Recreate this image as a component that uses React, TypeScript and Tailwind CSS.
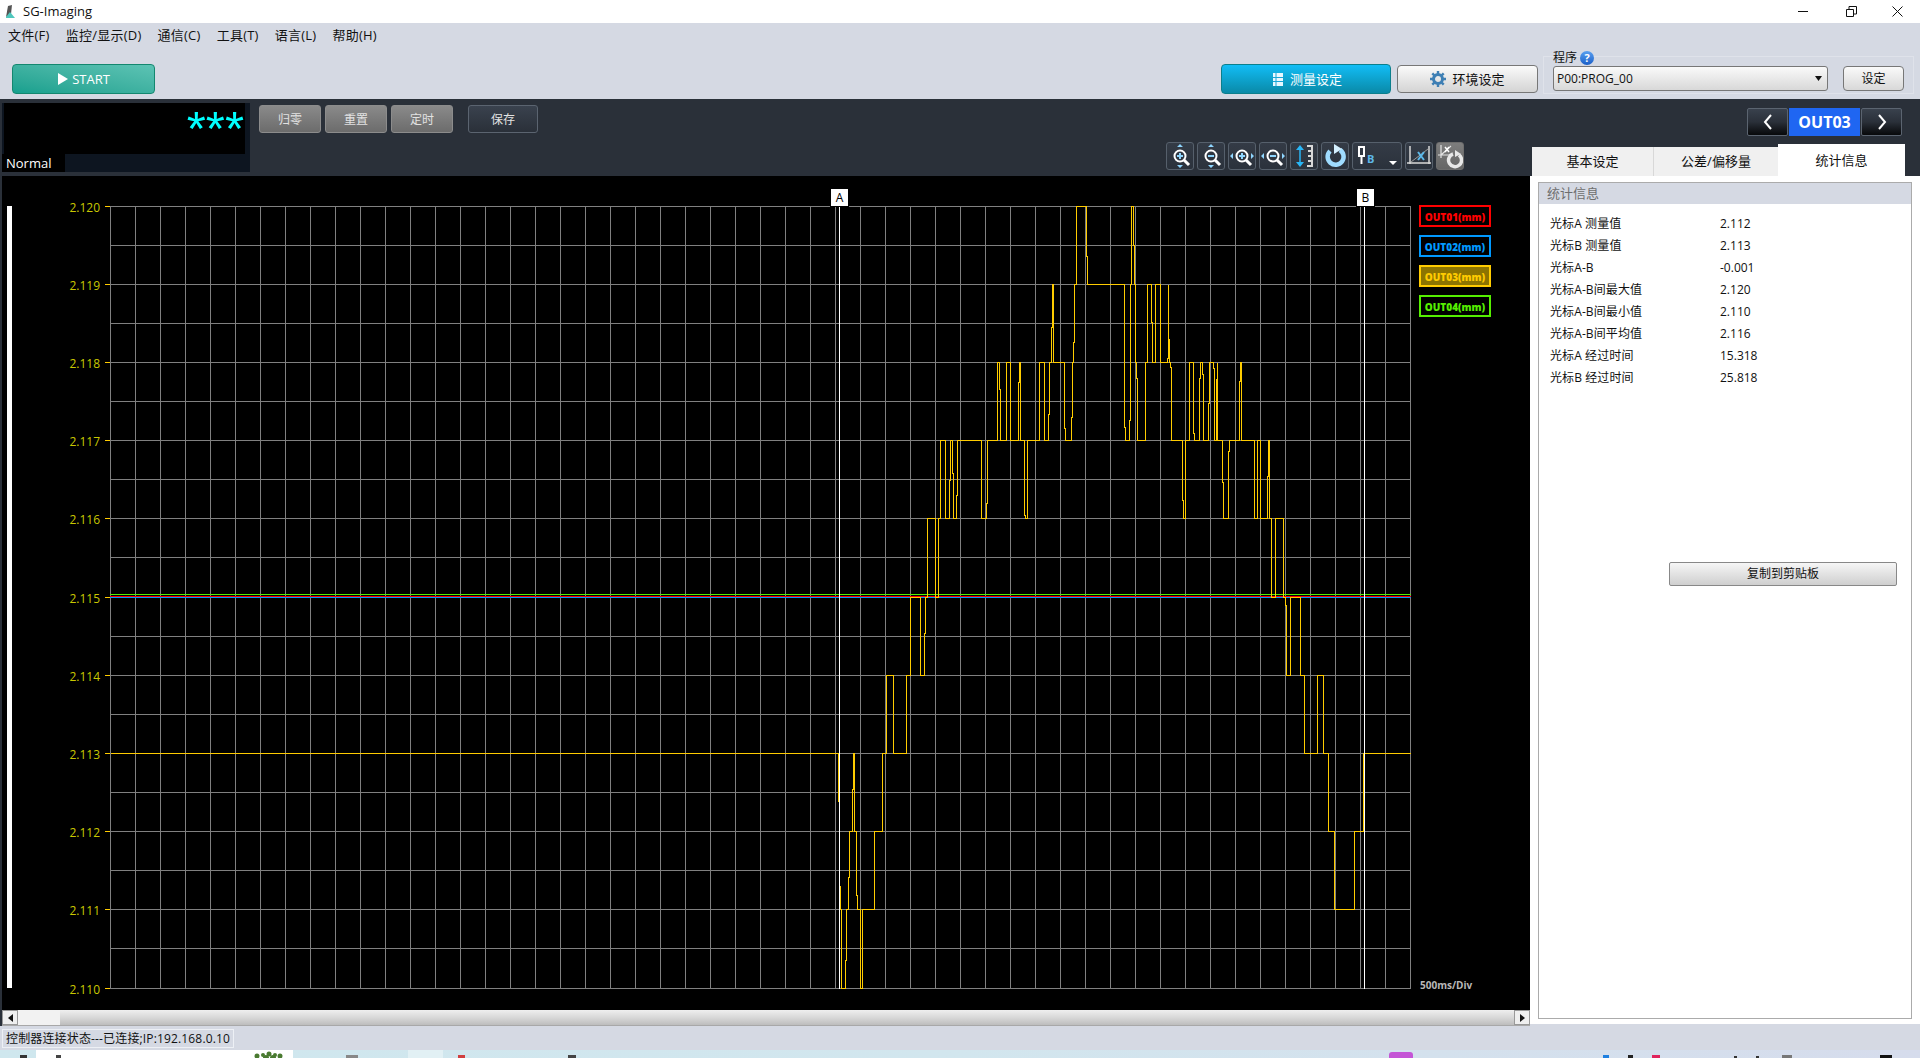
import React from "react";

const GRID_Y = [206, 245, 284, 323, 362, 401, 440, 479, 518, 557, 597, 636, 675, 714, 753, 792, 831, 870, 909, 948, 988];
const GRID_X = Array.from({ length: 53 }, (_, i) => 110 + i * 25);
const LABELS = ["2.120", "2.119", "2.118", "2.117", "2.116", "2.115", "2.114", "2.113", "2.112", "2.111", "2.110"];
const STEPS: [number, number][] = [
  [838, 801], [839, 886], [840, 909], [841, 988], [845, 960], [846, 909], [848, 877], [849, 831], [852, 789], [853, 753], [854, 831], [856, 895], [857, 909], [860, 988], [862, 909], [874, 831], [882, 753], [886, 675], [893, 753], [906, 675], [910, 597], [920, 675], [924, 633], [925, 597], [927, 518], [935, 597], [938, 518], [940, 440], [945, 518], [949, 480], [950, 440], [952, 473], [953, 518], [956, 495], [957, 440], [981, 518], [986, 503], [987, 440], [997, 362], [999, 389], [1000, 440], [1006, 362], [1010, 440], [1018, 382], [1019, 362], [1020, 440], [1024, 515], [1025, 518], [1027, 440], [1039, 362], [1044, 440], [1048, 414], [1049, 362], [1051, 327], [1052, 284], [1053, 362], [1064, 428], [1065, 440], [1071, 417], [1072, 362], [1073, 342], [1074, 284], [1076, 206], [1086, 256], [1087, 284], [1124, 427], [1125, 440], [1129, 420], [1130, 284], [1131, 206], [1133, 245], [1134, 284], [1135, 362], [1136, 378], [1137, 440], [1145, 362], [1147, 284], [1151, 322], [1152, 362], [1155, 284], [1160, 362], [1167, 358], [1168, 284], [1168, 339], [1169, 362], [1170, 367], [1171, 440], [1182, 500], [1183, 518], [1185, 440], [1189, 362], [1193, 433], [1194, 440], [1199, 378], [1200, 362], [1202, 374], [1203, 440], [1208, 403], [1209, 362], [1213, 368], [1214, 440], [1216, 379], [1217, 362], [1217, 440], [1222, 482], [1223, 518], [1228, 451], [1229, 440], [1239, 381], [1240, 362], [1241, 440], [1254, 518], [1257, 440], [1260, 518], [1267, 476], [1268, 440], [1269, 518], [1271, 597], [1275, 518], [1283, 597], [1285, 605], [1286, 675], [1290, 597], [1300, 675], [1304, 753], [1317, 675], [1323, 753], [1328, 831], [1334, 909], [1354, 831], [1363, 753], [1410, 753],
];
const tracePath = "M110.5 753.5" + STEPS.map(([x, y]) => `H${x + 0.5}V${y + 0.5}`).join("");

function Chart() {
  return (
    <svg width={1528} height={834} viewBox="2 176 1528 834" className="block">
      <rect x={7} y={206} width={5} height={782} fill="#fff" />
      <g stroke="#808080" strokeWidth={1} shapeRendering="crispEdges">
        {GRID_X.map((x) => <line key={x} x1={x + 0.5} x2={x + 0.5} y1={206} y2={989} />)}
        {GRID_Y.map((y) => <line key={y} x1={110} x2={1411} y1={y + 0.5} y2={y + 0.5} />)}
      </g>
      {LABELS.map((t, i) => {
        const y = GRID_Y[i * 2];
        return (
          <g key={t}>
            <line x1={105} x2={110} y1={y + 0.5} y2={y + 0.5} stroke="#ffcc00" shapeRendering="crispEdges" />
            <text x={100} y={y + 5.5} textAnchor="end" fontSize={12} fill="#c8c800" fontFamily="'Open Sans','Noto Sans',sans-serif">{t}</text>
          </g>
        );
      })}
      <g shapeRendering="crispEdges">
        <line x1={110} x2={1411} y1={594.5} y2={594.5} stroke="#55ee00" />
        <line x1={110} x2={1411} y1={596.5} y2={596.5} stroke="#ff0000" />
        <line x1={110} x2={1411} y1={597.5} y2={597.5} stroke="#0099ff" />
        <path d={tracePath} fill="none" stroke="#ffcc00" strokeWidth={1} />
        <line x1={839.5} x2={839.5} y1={206} y2={989} stroke="#fff" />
        <line x1={1364.5} x2={1364.5} y1={206} y2={989} stroke="#fff" />
      </g>
    </svg>
  );
}

const Magnifier = ({ sign }: { sign: "+" | "-" }) => (
  <g fill="none">
    <circle cx={14} cy={14} r={5.5} stroke="#fff" strokeWidth={2} />
    <path d="M18 18l5 5" stroke="#fff" strokeWidth={3} />
    <path d={sign === "+" ? "M11 14h6M14 11v6" : "M11 14h6"} stroke="#8fd6ff" strokeWidth={2} />
  </g>
);

function ToolIcon({ w = 28, active, children }: { w?: number; active?: boolean; children: React.ReactNode }) {
  const cls = active
    ? "border-[#6d6d6d] bg-gradient-to-b from-[#7d7d7d] to-[#666666]"
    : "border-[#56606c] bg-gradient-to-b from-[#343b46] to-[#2b323c]";
  return (
    <div className={`h-[28px] rounded-[3px] border ${cls}`}>
      <svg width={w - 2} height={26} viewBox={`1 1 ${w - 2} 26`} className="block">{children}</svg>
    </div>
  );
}

function Toolbar() {
  return (
    <div className="flex gap-[3px] mb-[6px]">
      <ToolIcon><path d="M14 2l3 3h-6zM14 26l3-3h-6z" fill="#8fd6ff" /><Magnifier sign="+" /></ToolIcon>
      <ToolIcon><path d="M14 2l3 3h-6zM14 26l3-3h-6z" fill="#8fd6ff" /><Magnifier sign="-" /></ToolIcon>
      <ToolIcon><path d="M2 14l3-3v6zM26 14l-3-3v6z" fill="#8fd6ff" /><Magnifier sign="+" /></ToolIcon>
      <ToolIcon><path d="M2 14l3-3v6zM26 14l-3-3v6z" fill="#8fd6ff" /><Magnifier sign="-" /></ToolIcon>
      <ToolIcon>
        <path d="M10 6v16" stroke="#29b6f6" strokeWidth={1.5} />
        <path d="M10 3l4 5H6zM10 25l4-5H6z" fill="#29b6f6" />
        <path d="M22 3v22M17 4h5M18 9h4M18 14h4M18 19h4M17 24h5" stroke="#d8d8d8" strokeWidth={2} fill="none" />
      </ToolIcon>
      <ToolIcon>
        <path d="M9 9a8 8 0 1 0 10-1" fill="none" stroke="#9fdcff" strokeWidth={4.5} />
        <path d="M13 2l8 5-8 5z" fill="#d4f0ff" />
      </ToolIcon>
      <ToolIcon w={50}>
        <path d="M7 5h5v9H7zM9.5 14v8" fill="none" stroke="#fff" strokeWidth={2} />
        <text x={15} y={21} fontSize={11} fontWeight={700} fill="#5db8e8" fontFamily="'Open Sans',sans-serif">B</text>
        <path d="M37 19h8l-4 4z" fill="#fff" />
      </ToolIcon>
      <ToolIcon>
        <path d="M5 4v18M24 4v18M2 21h24" stroke="#d8d8d8" strokeWidth={1.5} fill="none" />
        <path d="M6 20L23 7" stroke="#9a9a9a" strokeWidth={1} />
        <path d="M13 10l6 8M19 10l-6 8" stroke="#5db8e8" strokeWidth={2} />
      </ToolIcon>
      <ToolIcon active>
        <path d="M5 3v13M2 13h14M5 13L15 4" stroke="#e4e4e4" strokeWidth={1.2} fill="none" />
        <path d="M9 5l4 5M13 5l-4 5" stroke="#ffffff" strokeWidth={1.5} />
        <path d="M17 12a6.5 6.5 0 1 0 6 1" fill="none" stroke="#e8e8e8" strokeWidth={3.5} />
        <path d="M19 8l6 4-6 3z" fill="#e8e8e8" />
      </ToolIcon>
    </div>
  );
}

const GrayBtn = ({ t }: { t: string }) => (
  <button className="w-[62px] h-[28px] pt-[2px] rounded-[3px] border border-[#8c8c8c] bg-gradient-to-b from-[#8a8a8a] to-[#6c6c6c] text-[12px] text-[#e2e2e2]">{t}</button>
);

const Legend = ({ t, cls }: { t: string; cls: string }) => (
  <div className={`h-[22px] w-[72px] pt-[2px] border-2 flex items-center justify-center text-[10px] font-extrabold font-['Open_Sans',sans-serif] ${cls}`}>{t}</div>
);

const STATS: [string, string][] = [
  ["光标A 测量值", "2.112"],
  ["光标B 测量值", "2.113"],
  ["光标A-B", "-0.001"],
  ["光标A-B间最大值", "2.120"],
  ["光标A-B间最小值", "2.110"],
  ["光标A-B间平均值", "2.116"],
  ["光标A 经过时间", "15.318"],
  ["光标B 经过时间", "25.818"],
];

export default function App() {
  return (
    <div className="w-[1920px] h-[1058px] overflow-hidden flex flex-col bg-[#d5d9e3] text-[12px] text-[#111] font-['Open_Sans','Noto_Sans_CJK_SC',sans-serif]">
      {/* title bar */}
      <div className="h-[23px] bg-white flex items-center">
        <svg width={11} height={14} viewBox="0 0 11 14" className="ml-[5px]">
          <path d="M3 1l4-1-1 9-5 3z" fill="#555" />
          <path d="M1 12l4-5 5 6H1z" fill="#4fc7bd" />
        </svg>
        <span className="ml-[7px] text-[13px]">SG-Imaging</span>
        <div className="ml-auto flex items-center">
          <svg width={11} height={11} viewBox="0 0 11 11" className="mr-[37px]"><path d="M0 5.5h10" stroke="#111" /></svg>
          <svg width={11} height={11} viewBox="0 0 11 11" className="mr-[35px]"><path d="M.5 3.5h7v7h-7zM3 3V.5h7.5V8H8" fill="none" stroke="#111" /></svg>
          <svg width={11} height={11} viewBox="0 0 11 11" className="mr-[17px]"><path d="M.5.5l10 10M10.5.5l-10 10" stroke="#111" /></svg>
        </div>
      </div>
      {/* menu */}
      <div className="h-[26px] flex items-center pl-[8px] gap-[16px] text-[13px] tracking-[0.25px]">
        {["文件(F)", "监控/显示(D)", "通信(C)", "工具(T)", "语言(L)", "帮助(H)"].map((m) => <span key={m}>{m}</span>)}
      </div>
      {/* action row */}
      <div className="h-[50px] flex">
        <button className="ml-[12px] mt-[15px] w-[143px] h-[30px] pt-[1px] rounded-[4px] border border-[#13876f] bg-gradient-to-tr from-[#14a08e] to-[#5cc3b4] text-white text-[13px] flex items-center justify-center gap-[4px]">
          <svg width={11} height={12} viewBox="0 0 11 12" className="-mt-[2px]"><path d="M1 0l10 6-10 6z" fill="#fff" /></svg>
          START
        </button>
        <button className="ml-auto mt-[15px] w-[170px] h-[30px] pt-[2px] pl-[3px] rounded-[4px] border border-[#0b7f8c] bg-gradient-to-b from-[#12bdf6] to-[#0a8aa8] text-white text-[13px] flex items-center justify-center gap-[7px]">
          <svg width={10} height={13} viewBox="0 0 10 13" className="-mt-[2px]"><path d="M0 0h10v13H0z" fill="#e8f8ff" /><path d="M0 4.500h10M0 8.500h10M3 0v13" stroke="#19a6d6" /></svg>
          测量设定
        </button>
        <button className="ml-[6px] mt-[16px] w-[141px] h-[28px] pt-[2px] rounded-[4px] border border-[#777] bg-gradient-to-b from-[#fafafa] to-[#d4d4d4] text-[13px] flex items-center justify-center gap-[6px]">
          <svg width={16} height={16} viewBox="0 0 16 16" className="-mt-[2px]">
            <circle cx={8} cy={8} r={4.5} fill="none" stroke="#3e7fb4" strokeWidth={3} />
            <path d="M8 0v3M8 13v3M0 8h3M13 8h3M2.3 2.3l2 2M11.7 11.7l2 2M2.3 13.7l2-2M11.7 4.3l2-2" stroke="#3e7fb4" strokeWidth={2.4} />
          </svg>
          环境设定
        </button>
        <div className="relative ml-[5px] mr-[6px] mt-[7px] w-[371px] h-[38px] border border-[#dfe2ea] flex items-start pl-[9px] pt-[9px]">
          <div className="absolute left-[9px] -top-[8px] flex items-center gap-[3px]">
            <span>程序</span>
            <span className="w-[14px] h-[14px] rounded-full bg-gradient-to-b from-[#5aa0f0] to-[#1a5fc8] text-white text-[11px] font-bold leading-[14px] text-center">?</span>
          </div>
          <div className="w-[275px] h-[25px] rounded-[3px] border border-[#777] bg-gradient-to-b from-[#fafafa] to-[#d8d8d8] flex items-center pl-[3px] pr-[5px] justify-between">
            <span>P00:PROG_00</span>
            <svg width={7} height={5} viewBox="0 0 7 5"><path d="M0 0h7L3.500 5z" fill="#111" /></svg>
          </div>
          <button className="ml-[15px] w-[61px] h-[25px] rounded-[4px] border border-[#777] bg-gradient-to-b from-[#fafafa] to-[#d8d8d8]">设定</button>
        </div>
      </div>
      {/* dark header */}
      <div className="h-[77px] flex bg-[#2a3039]">
        <div className="ml-[2px] mt-[4px] w-[248px] h-[69px] flex flex-col bg-[#0d1520]">
          <div className="h-[51px] ml-[2px] w-[241px] bg-black flex items-start justify-end text-[#00ffff] text-[49px] leading-[44px] pt-[3px] pr-[1px] font-['Liberation_Sans',sans-serif]">
            <span>***</span>
          </div>
          <div className="h-[18px] w-[63px] pt-[1px] bg-black text-white text-[13px] leading-[17px] pl-[4px] whitespace-nowrap">Normal</div>
        </div>
        <div className="ml-[9px] mt-[6px] flex gap-[4px] h-[28px]">
          <GrayBtn t="归零" />
          <GrayBtn t="重置" />
          <GrayBtn t="定时" />
          <button className="ml-[11px] w-[70px] h-[28px] pt-[1px] rounded-[3px] border border-[#5b6470] bg-gradient-to-b from-[#3a424e] to-[#2a3039] text-[12px] text-[#e2e2e2]">保存</button>
        </div>
        <div className="flex-1 flex flex-col">
          <div className="mt-[9px] h-[28px] flex justify-end pr-[18px] gap-[1px]">
            <button className="w-[41px] h-[28px] rounded-[2px] border border-[#5b6470] bg-gradient-to-b from-[#39414d] via-[#2a3039] to-[#08090b] flex items-center justify-center">
              <svg width={10} height={16} viewBox="0 0 10 16"><path d="M8 1L2 8l6 7" fill="none" stroke="#fff" strokeWidth={2} /></svg>
            </button>
            <div className="w-[71px] h-[28px] bg-[#1f66f2] text-white text-[16px] font-bold flex items-center justify-center">OUT03</div>
            <button className="w-[41px] h-[28px] rounded-[2px] border border-[#5b6470] bg-gradient-to-b from-[#39414d] via-[#2a3039] to-[#08090b] flex items-center justify-center">
              <svg width={10} height={16} viewBox="0 0 10 16"><path d="M2 1l6 7-6 7" fill="none" stroke="#fff" strokeWidth={2} /></svg>
            </button>
          </div>
          <div className="flex-1 flex justify-end items-end pr-[15px]">
            <Toolbar />
            <div className="ml-[68px] flex items-end">
              <div className="w-[122px] h-[29px] bg-[#f0f0f0] border-r border-[#d8d8d8] text-[13px] flex items-center justify-center">基本设定</div>
              <div className="w-[124px] h-[29px] bg-[#f0f0f0] text-[13px] flex items-center justify-center">公差/偏移量</div>
              <div className="w-[127px] h-[32px] pt-[2px] bg-white text-[13px] flex items-center justify-center">统计信息</div>
            </div>
          </div>
        </div>
      </div>
      {/* main */}
      <div className="h-[850px] flex">
        <div className="w-[1530px] flex flex-col bg-[#2a3039] pl-[2px]">
          <div className="relative h-[834px] bg-black">
            <Chart />
            <div className="absolute left-[828px] top-[12px] w-[19px] h-[19px] bg-white border border-black text-[12px] text-black flex items-center justify-center">A</div>
            <div className="absolute left-[1354px] top-[12px] w-[19px] h-[19px] bg-white border border-black text-[12px] text-black flex items-center justify-center">B</div>
            <div className="absolute left-[1417px] top-[29px] flex flex-col gap-[8px]">
              <Legend t="OUT01(mm)" cls="border-[#ff0000] text-[#ff0000]" />
              <Legend t="OUT02(mm)" cls="border-[#0099ff] text-[#0099ff]" />
              <Legend t="OUT03(mm)" cls="border-[#ffcc00] text-[#ffcc00] bg-[#8c7400]" />
              <Legend t="OUT04(mm)" cls="border-[#55ee00] text-[#55ee00]" />
            </div>
            <span className="absolute left-[1418px] top-[802px] text-[10px] font-bold text-[#b8b8b8] font-['Open_Sans',sans-serif]">500ms/Div</span>
          </div>
          <div className="h-[16px] flex border-b border-[#a8a8a8]">
            <button className="w-[16px] bg-[#efefef] border border-[#999] flex items-center justify-center">
              <svg width={5} height={8} viewBox="0 0 5 8"><path d="M5 0v8L0 4z" fill="#111" /></svg>
            </button>
            <div className="w-[42px] bg-[#f2f2f2]" />
            <div className="flex-1 bg-gradient-to-b from-[#efefef] via-[#d8d8d8] to-[#bdbdbd]" />
            <button className="w-[16px] bg-[#efefef] border border-[#999] flex items-center justify-center">
              <svg width={5} height={8} viewBox="0 0 5 8"><path d="M0 0v8l5-4z" fill="#111" /></svg>
            </button>
          </div>
        </div>
        <div className="w-[390px] h-[848px] bg-white pl-[8px] pr-[8px] pt-[6px] pb-[5px]">
          <div className="h-full border border-[#ababab] flex flex-col">
            <div className="h-[21px] bg-[#d5d9e3] text-[#6e6e6e] text-[13px] leading-[21px] pl-[8px]">统计信息</div>
            <div className="pt-[9px] pl-[11px] flex flex-col">
              {STATS.map(([a, b]) => (
                <div key={a} className="h-[22px] flex items-center">
                  <span className="w-[170px] tracking-[0.1px]">{a}</span>
                  <span>{b}</span>
                </div>
              ))}
            </div>
            <button className="ml-[130px] mt-[173px] w-[228px] h-[24px] rounded-[2px] border border-[#888] bg-gradient-to-b from-[#f6f6f6] to-[#cfcfcf]">复制到剪贴板</button>
          </div>
        </div>
      </div>
      {/* status */}
      <div className="h-[24px] pl-[2px] pt-[3px]">
        <div className="h-[19px] w-[232px] border border-[#edf0f5] pl-[3px] leading-[17px] tracking-[0.15px] whitespace-nowrap">控制器连接状态---已连接;IP:192.168.0.10</div>
      </div>
      {/* clipped taskbar */}
      <div className="h-[8px] bg-gradient-to-r from-[#cfe7ee] via-[#d2e6ee] to-[#d6dcec]">
        <svg width={1920} height={8} viewBox="0 0 1920 8" className="block">
          <rect x={36} y={0} width={257} height={8} fill="#fff" />
          <rect x={408} y={0} width={35} height={8} fill="#e2f0f4" />
          <rect x={20} y={5} width={7} height={3} fill="#333" />
          <rect x={56} y={5} width={5} height={3} fill="#444" />
          <g fill="#4a7a30">
            <circle cx={257} cy={6} r={2.5} />
            <circle cx={263} cy={5} r={2} />
            <circle cx={269} cy={4} r={2.5} />
            <circle cx={275} cy={5} r={2} />
            <circle cx={280} cy={6} r={2.5} />
            <circle cx={266} cy={8} r={3} />
            <circle cx={273} cy={8} r={3} />
          </g>
          <rect x={346} y={5} width={12} height={3} fill="#888" />
          <rect x={458} y={5} width={7} height={3} fill="#d04040" />
          <rect x={568} y={5} width={8} height={3} fill="#444" />
          <path d="M1389 8V5q0-3 3-3h18q3 0 3 3v3z" fill="#c455d6" />
          <rect x={1603} y={5} width={6} height={3} fill="#1d7fe0" />
          <rect x={1628} y={5} width={5} height={3} fill="#222" />
          <rect x={1652} y={5} width={8} height={3} fill="#e0245e" />
          <rect x={1734} y={6} width={3} height={2} fill="#333" />
          <rect x={1756} y={6} width={3} height={2} fill="#333" />
          <rect x={1782} y={5} width={10} height={3} fill="#777" />
          <rect x={1880} y={5} width={12} height={3} fill="#111" />
        </svg>
      </div>
    </div>
  );
}
